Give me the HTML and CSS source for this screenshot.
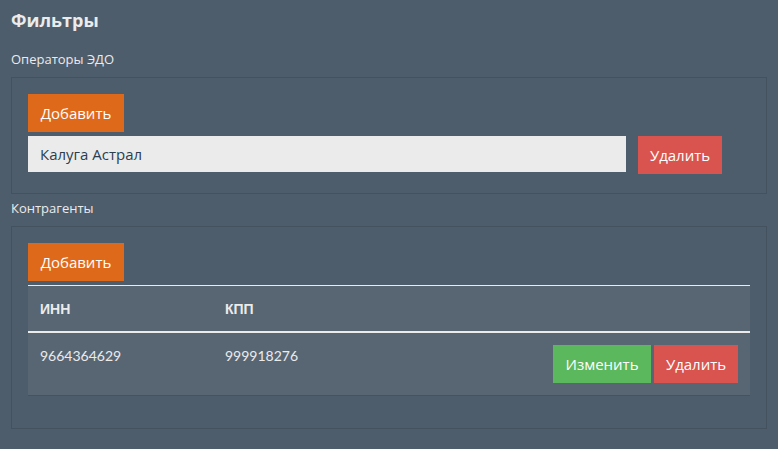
FILE: index.html
```html
<!DOCTYPE html>
<html lang="ru">
<head>
<meta charset="utf-8">
<title>Фильтры</title>
<link rel="stylesheet" href="styles.css">
</head>
<body>
<h1 class="title">Фильтры</h1>

<div class="label">Операторы ЭДО</div>
<div class="panel panel-ops">
  <button class="btn btn-orange">Добавить</button>
  <div class="op-row">
    <div class="input">Калуга Астрал</div>
    <button class="btn btn-red">Удалить</button>
  </div>
</div>

<div class="label">Контрагенты</div>
<div class="panel panel-ctr">
  <button class="btn btn-orange">Добавить</button>
  <table class="table">
    <thead>
      <tr><th class="col-inn">ИНН</th><th class="col-kpp">КПП</th><th></th></tr>
    </thead>
    <tbody>
      <tr>
        <td class="num">9664364629</td>
        <td class="num">999918276</td>
        <td class="actions"><button class="btn btn-green">Изменить</button><button class="btn btn-red">Удалить</button></td>
      </tr>
    </tbody>
  </table>
</div>
</body>
</html>
```

FILE: styles.css
```css
* { box-sizing: border-box; }

html, body {
  margin: 0;
  background: #4e5d6c;
}

body {
  padding: 10px 11px 0 11px;
  font-family: "Open Sans", "Liberation Sans", Arial, sans-serif;
  font-size: 15px;
  line-height: 1.42857;
  color: #ebebeb;
}

.title {
  margin: 0;
  font-size: 18px;
  line-height: 20px;
  font-weight: 700;
}

.label {
  font-size: 13px;
  line-height: 20px;
  margin-bottom: 8px;
}

.title + .label { margin-top: 19px; }

.panel {
  width: 756px;
  border: 1px solid #44515e;
  padding: 16px 16px 19px 16px;
  margin-bottom: 4px;
}

.panel-ctr { padding-bottom: 32px; }

.btn {
  display: inline-block;
  border: 0;
  margin: 0;
  height: 38px;
  padding: 0;
  font-family: inherit;
  font-size: 15px;
  line-height: 38px;
  color: #fff;
  text-align: center;
  cursor: pointer;
  vertical-align: top;
}

.btn-orange { background: #df691a; width: 96px; }
.btn-red { background: #d9534f; width: 84px; }
.btn-green { background: #5cb85c; width: 98px; }

.op-row {
  display: flex;
  align-items: flex-start;
  gap: 12px;
  margin-top: 4px;
}

.input {
  width: 598px;
  height: 36px;
  background: #ebebeb;
  color: #2b3e50;
  padding: 0 12px;
  line-height: 36px;
  font-size: 15px;
}

.table {
  margin-top: 4px;
  width: 722px;
  border-collapse: collapse;
  background: #586674;
  font-size: 14px;
}

.table th, .table td {
  padding: 12px;
  text-align: left;
  vertical-align: top;
  line-height: 21px;
}

.table th {
  font-family: "Liberation Sans", Arial, sans-serif;
  font-weight: 700;
  padding-top: 13px;
  padding-bottom: 11px;
}

.table .num { font-family: Lato, "Open Sans", sans-serif; }

.table thead tr { border-top: 1px solid #ebebeb; border-bottom: 2px solid #ebebeb; }
.table tbody tr { border-bottom: 1px solid #46535f; }

.col-inn { width: 185px; }
.col-kpp { width: 200px; }

.actions {
  text-align: right !important;
  white-space: nowrap;
  font-size: 0;
}

.actions .btn + .btn { margin-left: 3px; }
```
